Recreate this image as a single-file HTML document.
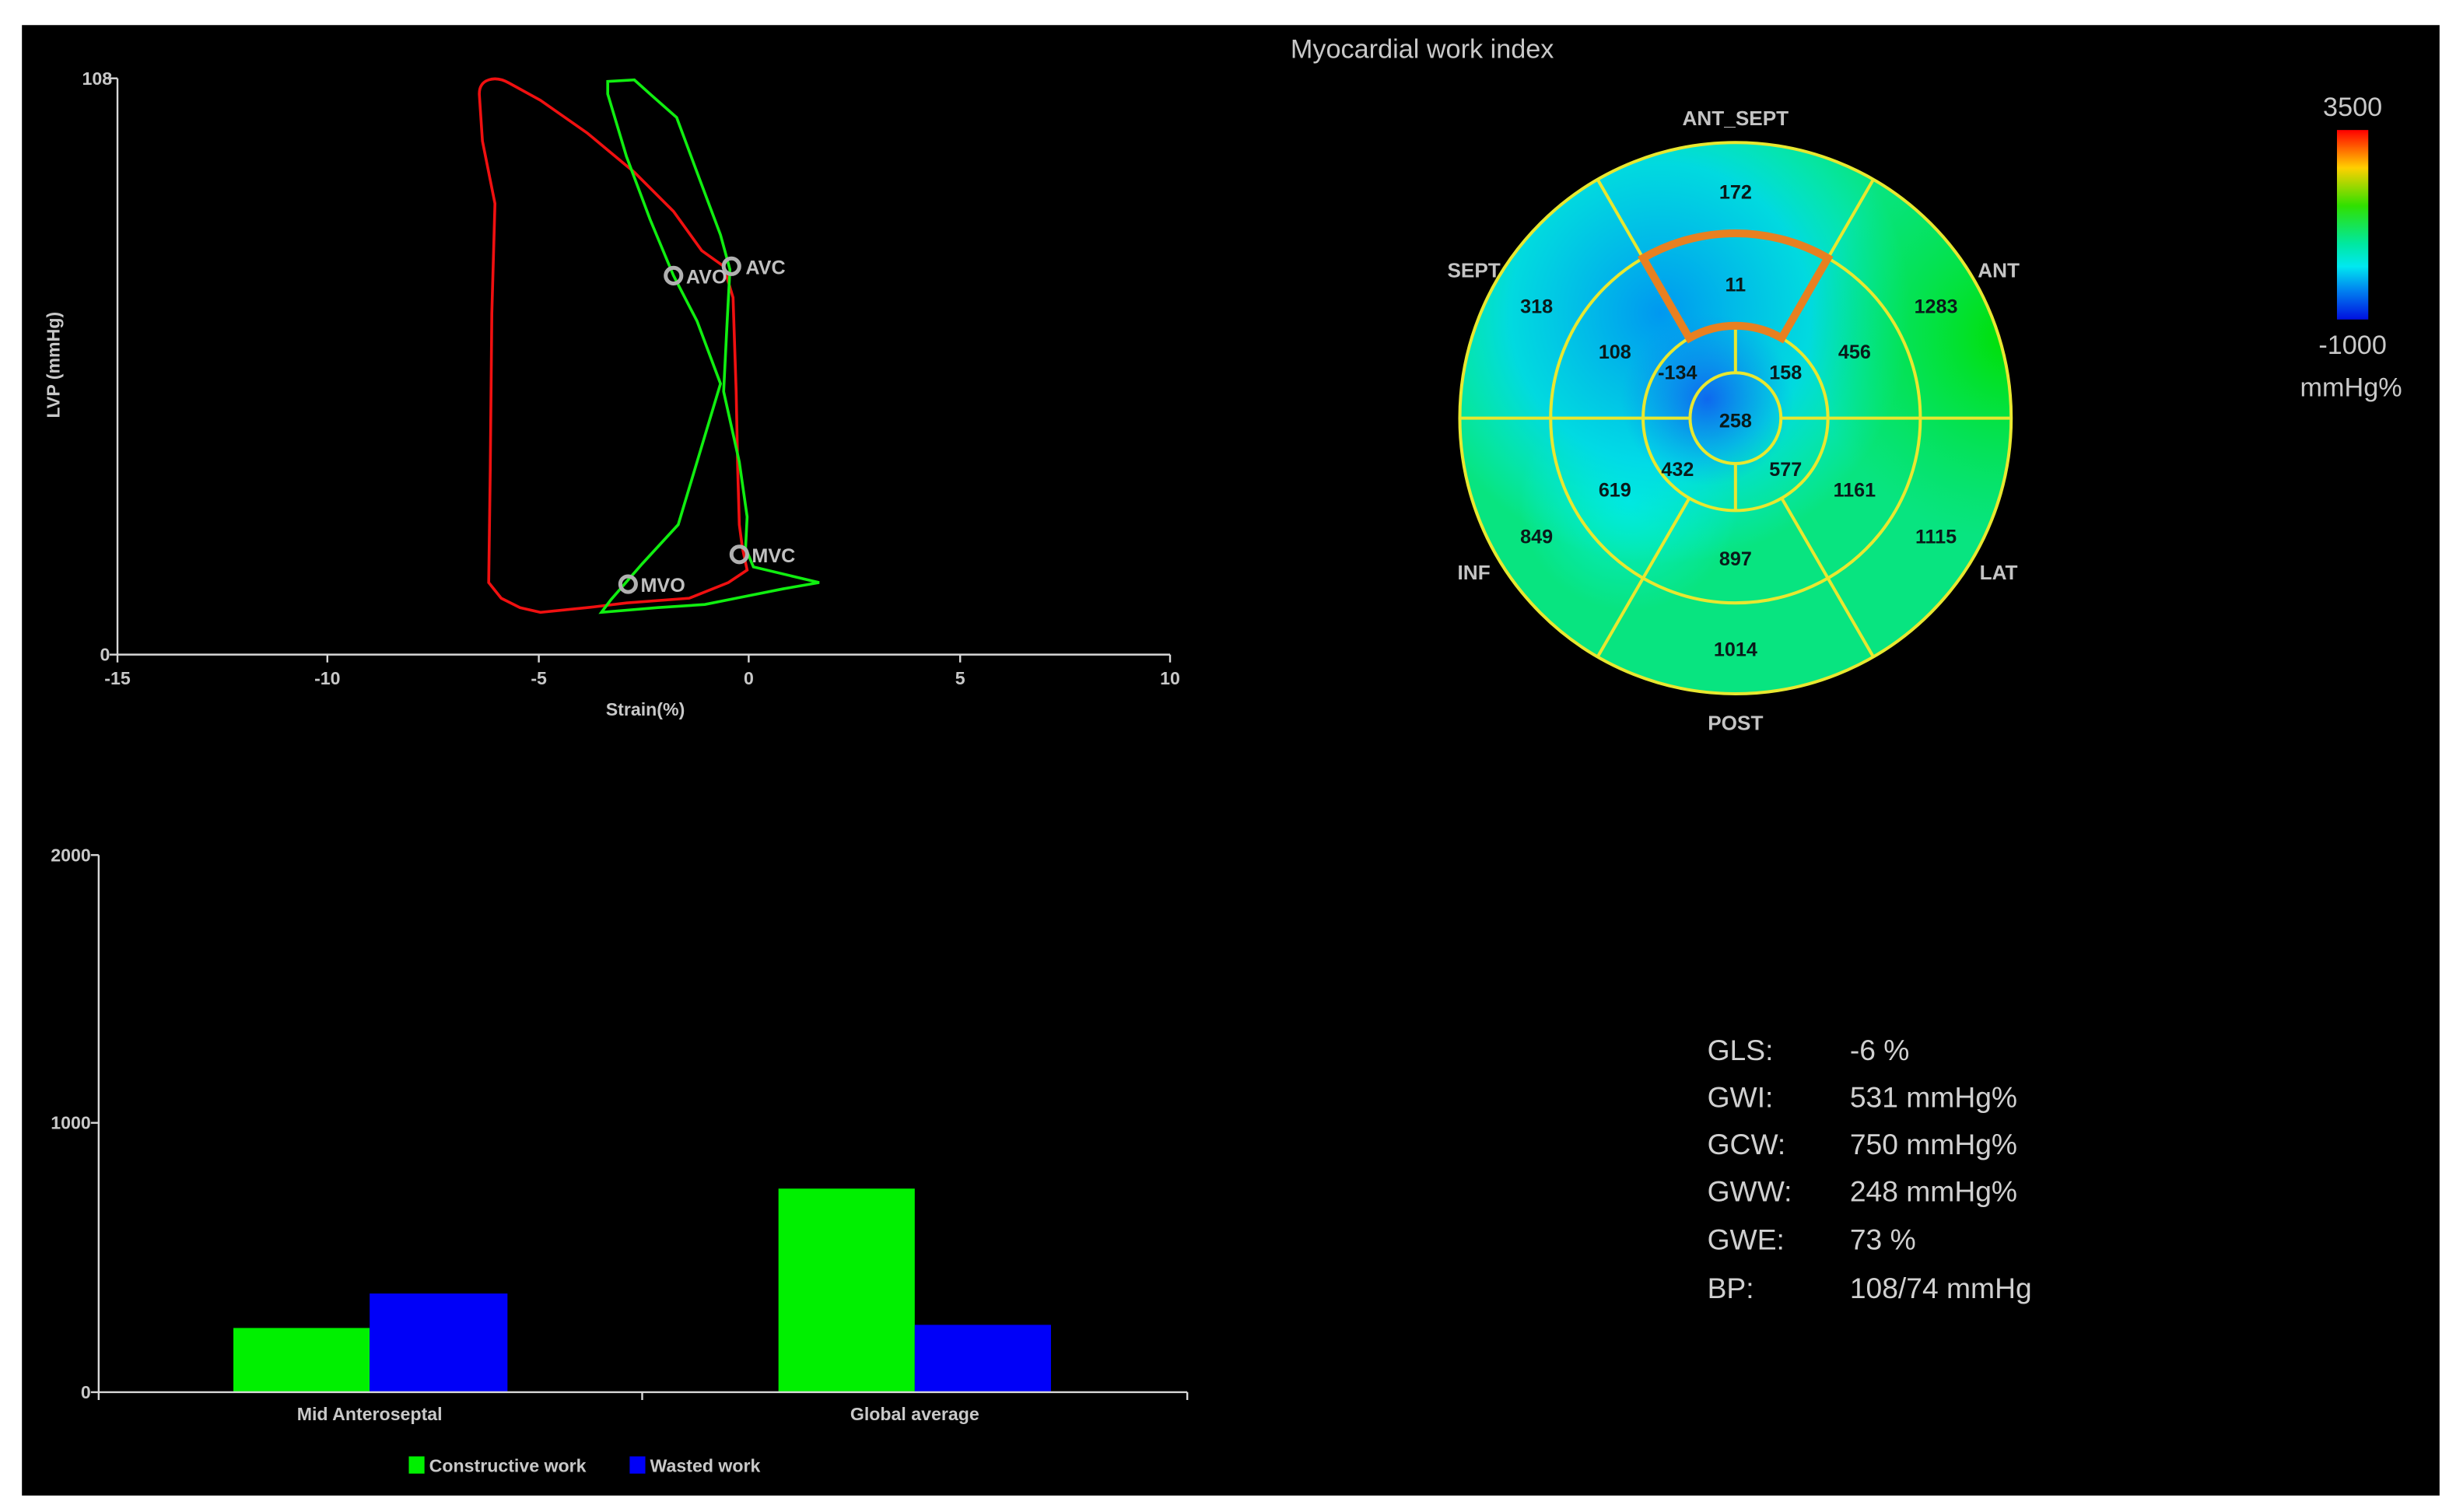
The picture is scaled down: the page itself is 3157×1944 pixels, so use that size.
<!DOCTYPE html>
<html><head><meta charset="utf-8"><style>
html,body{margin:0;padding:0;background:#fff;}
svg{display:block;}
text{font-family:"Liberation Sans",Arial,sans-serif;}
.ax{fill:#c8c8c8;font-size:11.5px;font-weight:bold;}
.seg{fill:#0a1a1a;font-size:12.5px;font-weight:bold;text-anchor:middle;}
.lab{fill:#c4c4c4;font-size:13px;font-weight:bold;text-anchor:middle;}
.st{fill:#d0d0d0;font-size:18.5px;}
</style></head><body>
<svg width="3157" height="1944" viewBox="0 0 1568 965.5" xmlns="http://www.w3.org/2000/svg">
<defs>
<radialGradient id="gBlue" cx="1060" cy="200" r="160" gradientUnits="userSpaceOnUse">
<stop offset="0" stop-color="#0098f0"/><stop offset="0.6" stop-color="#00d8f0" stop-opacity="0.85"/><stop offset="1" stop-color="#00f0f0" stop-opacity="0"/></radialGradient>
<radialGradient id="gDeep" cx="1090" cy="255" r="55" gradientUnits="userSpaceOnUse">
<stop offset="0" stop-color="#1058f0" stop-opacity="0.85"/><stop offset="1" stop-color="#1080f0" stop-opacity="0"/></radialGradient>
<radialGradient id="gGreen" cx="1285" cy="215" r="130" gradientUnits="userSpaceOnUse">
<stop offset="0" stop-color="#00e000"/><stop offset="1" stop-color="#00e040" stop-opacity="0"/></radialGradient>
<radialGradient id="gCyan" cx="1040" cy="320" r="70" gradientUnits="userSpaceOnUse">
<stop offset="0" stop-color="#00f0e8" stop-opacity="0.8"/><stop offset="1" stop-color="#00f0e8" stop-opacity="0"/></radialGradient>
<linearGradient id="cb" x1="0" y1="0" x2="0" y2="1">
<stop offset="0" stop-color="#ff0000"/><stop offset="0.2" stop-color="#ffd000"/><stop offset="0.4" stop-color="#30e000"/><stop offset="0.6" stop-color="#00e8a0"/><stop offset="0.72" stop-color="#00e8f0"/><stop offset="0.85" stop-color="#0080f0"/><stop offset="1" stop-color="#0010e0"/></linearGradient>
<clipPath id="disc"><circle cx="1108" cy="267" r="176"/></clipPath>
</defs>
<rect x="0" y="0" width="1568" height="965.5" fill="#fff"/>
<rect x="14" y="16" width="1543.5" height="939" fill="#000"/>

<text x="908" y="37" fill="#c8c8c8" font-size="17" text-anchor="middle">Myocardial work index</text>

<g stroke="#d8d8d8" stroke-width="1.2" fill="none">
<line x1="75" y1="50" x2="75" y2="418"/>
<line x1="75" y1="418" x2="747" y2="418"/>
<line x1="70" y1="50" x2="75" y2="50"/><line x1="70" y1="418" x2="75" y2="418"/>
<line x1="75" y1="418" x2="75" y2="423"/><line x1="209" y1="418" x2="209" y2="423"/><line x1="344" y1="418" x2="344" y2="423"/><line x1="478" y1="418" x2="478" y2="423"/><line x1="613" y1="418" x2="613" y2="423"/><line x1="747" y1="418" x2="747" y2="423"/>
</g>
<g class="ax" text-anchor="middle">
<text x="75" y="437">-15</text><text x="209" y="437">-10</text><text x="344" y="437">-5</text><text x="478" y="437">0</text><text x="613" y="437">5</text><text x="747" y="437">10</text>
<text x="412" y="457">Strain(%)</text>
</g>
<text class="ax" x="62" y="54" text-anchor="middle">108</text>
<text class="ax" x="67" y="422" text-anchor="middle">0</text>
<text class="ax" x="38" y="233" text-anchor="middle" transform="rotate(-90 38 233)">LVP (mmHg)</text>

<path d="M312,51 Q318,49 325,53 L345,64 L375,85 L405,110 L430,135 L448,160 L462,170 L468,190 L470,250 L471,300 L472,335 L474,350 L477,364 L465,372 L440,382 L400,385 L375,388 L345,391 L332,388 L320,382 L312,372 L313,300 L314,200 L316,130 L308,90 L306,60 Q306,53 312,51 Z" fill="none" stroke="#f01010" stroke-width="1.8"/>
<path d="M388,52 L405,51 L415,60 L432,75 L445,110 L460,150 L466,172 L464,210 L462,250 L472,295 L477,330 L476,350 L481,362 L523,372 L500,376 L470,382 L450,386 L420,388 L384,391 L390,383 L410,360 L433,335 L445,295 L460,245 L445,205 L430,176 L415,140 L400,100 L388,60 Z" fill="none" stroke="#10ee10" stroke-width="1.8"/>
<g fill="none" stroke="#b0b0b0" stroke-width="2.5">
<circle cx="430" cy="176" r="5"/><circle cx="467" cy="170" r="5"/><circle cx="472" cy="354" r="5"/><circle cx="401" cy="373" r="5"/>
</g>
<g fill="#c0c0c0" font-size="12.5" font-weight="bold">
<text x="438" y="181">AVO</text><text x="476" y="175">AVC</text><text x="480" y="359">MVC</text><text x="409" y="378">MVO</text>
</g>

<g clip-path="url(#disc)">
<rect x="930" y="90" width="360" height="360" fill="#08e480"/>
<rect x="930" y="90" width="360" height="360" fill="url(#gCyan)"/>
<rect x="930" y="90" width="360" height="360" fill="url(#gBlue)"/>
<rect x="930" y="90" width="360" height="360" fill="url(#gGreen)"/>
<rect x="930" y="90" width="360" height="360" fill="url(#gDeep)"/>
</g>
<g stroke="#e8e830" stroke-width="2" fill="none">
<circle cx="1108" cy="267" r="176"/>
<circle cx="1108" cy="267" r="118"/>
<circle cx="1108" cy="267" r="59"/>
<circle cx="1108" cy="267" r="29"/>
<line x1="932" y1="267" x2="1079" y2="267"/><line x1="1137" y1="267" x2="1284" y2="267"/>
<line x1="1108" y1="208" x2="1108" y2="238"/><line x1="1108" y1="296" x2="1108" y2="326"/>
<line x1="1078.5" y1="215.9" x2="1020" y2="114.6"/>
<line x1="1137.5" y1="215.9" x2="1196" y2="114.6"/>
<line x1="1078.5" y1="318.1" x2="1020" y2="419.4"/>
<line x1="1137.5" y1="318.1" x2="1196" y2="419.4"/>
</g>
<path d="M1049,164.8 A118,118 0 0 1 1167,164.8 L1137.5,215.9 A59,59 0 0 0 1078.5,215.9 Z" fill="none" stroke="#e88020" stroke-width="5" stroke-linejoin="miter"/>
<g class="seg">
<text x="1108" y="127">172</text><text x="1108" y="186">11</text>
<text x="981" y="200">318</text><text x="1236" y="200">1283</text>
<text x="1031" y="229">108</text><text x="1184" y="229">456</text>
<text x="1071" y="242">-134</text><text x="1140" y="242">158</text>
<text x="1108" y="273">258</text>
<text x="1071" y="304">432</text><text x="1140" y="304">577</text>
<text x="1031" y="317">619</text><text x="1184" y="317">1161</text>
<text x="981" y="347">849</text><text x="1236" y="347">1115</text>
<text x="1108" y="361">897</text><text x="1108" y="419">1014</text>
</g>
<g class="lab">
<text x="1108" y="80">ANT_SEPT</text>
<text x="941" y="177">SEPT</text><text x="1276" y="177">ANT</text>
<text x="941" y="370">INF</text><text x="1276" y="370">LAT</text>
<text x="1108" y="466">POST</text>
</g>

<rect x="1492" y="83" width="20" height="121" fill="url(#cb)"/>
<g fill="#c8c8c8" font-size="17" text-anchor="middle">
<text x="1502" y="74">3500</text><text x="1502" y="226">-1000</text><text x="1501" y="253">mmHg%</text>
</g>

<rect x="149" y="848" width="87" height="41" fill="#00f000"/>
<rect x="236" y="826" width="88" height="63" fill="#0000f8"/>
<rect x="497" y="759" width="87" height="130" fill="#00f000"/>
<rect x="584" y="846" width="87" height="43" fill="#0000f8"/>
<g stroke="#d8d8d8" stroke-width="1.2" fill="none">
<line x1="63" y1="546" x2="63" y2="889"/>
<line x1="63" y1="889" x2="758" y2="889"/>
<line x1="58" y1="546" x2="63" y2="546"/><line x1="58" y1="717" x2="63" y2="717"/><line x1="58" y1="889" x2="63" y2="889"/>
<line x1="63" y1="889" x2="63" y2="894"/><line x1="410" y1="889" x2="410" y2="894"/><line x1="758" y1="889" x2="758" y2="894"/>
</g>
<g class="ax" text-anchor="end">
<text x="58" y="550">2000</text><text x="58" y="721">1000</text><text x="58" y="893">0</text>
</g>
<g class="ax" text-anchor="middle">
<text x="236" y="907">Mid Anteroseptal</text><text x="584" y="907">Global average</text>
</g>
<rect x="261" y="930" width="10" height="11" fill="#00f000"/>
<text class="ax" x="274" y="940">Constructive work</text>
<rect x="402" y="930" width="10" height="11" fill="#0000f8"/>
<text class="ax" x="415" y="940">Wasted work</text>

<g class="st">
<text x="1090" y="677">GLS:</text><text x="1181" y="677">-6 %</text>
<text x="1090" y="707">GWI:</text><text x="1181" y="707">531 mmHg%</text>
<text x="1090" y="737">GCW:</text><text x="1181" y="737">750 mmHg%</text>
<text x="1090" y="767">GWW:</text><text x="1181" y="767">248 mmHg%</text>
<text x="1090" y="798">GWE:</text><text x="1181" y="798">73 %</text>
<text x="1090" y="829">BP:</text><text x="1181" y="829">108/74 mmHg</text>
</g>
</svg>
</body></html>
